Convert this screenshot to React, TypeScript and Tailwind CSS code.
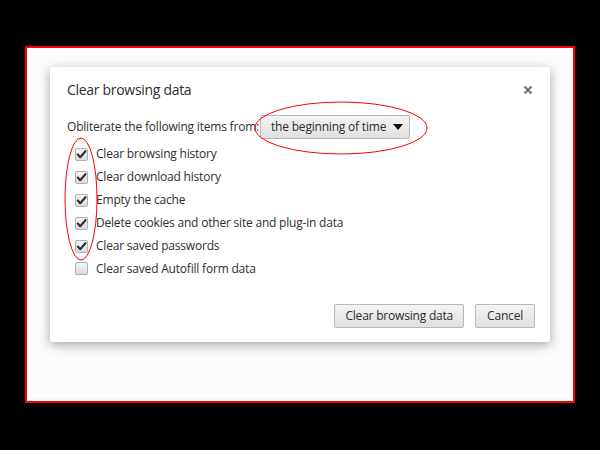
import React from "react";

const font = { fontFamily: '"Open Sans", "Noto Sans", sans-serif' };

function Check({ checked }: { checked: boolean }) {
  return (
    <div className="w-[13px] h-[13px] rounded-[2px] border border-[#b0b0b0] bg-gradient-to-b from-[#f4f4f4] to-[#dcdcdc] flex items-center justify-center shrink-0">
      {checked && (
        <svg width="11" height="11" viewBox="0 0 11 11">
          <path d="M1.8 5.6 L4.2 8.2 L9.4 2.2" fill="none" stroke="#333" strokeWidth="2.2" strokeLinecap="round" strokeLinejoin="round" />
        </svg>
      )}
    </div>
  );
}

const items: [string, boolean][] = [
  ["Clear browsing history", true],
  ["Clear download history", true],
  ["Empty the cache", true],
  ["Delete cookies and other site and plug-in data", true],
  ["Clear saved passwords", true],
  ["Clear saved Autofill form data", false],
];

const btn = "h-[24px] border border-[#b8b8b8] rounded-[2px] bg-gradient-to-b from-[#f3f3f3] to-[#e0e0e0] whitespace-nowrap";

export default function App() {
  return (
    <div className="w-[600px] h-[450px] bg-black pt-[46px] pl-[25px]" style={font}>
      <div className="relative w-[550px] h-[357px] border-2 border-[#ff0000] bg-[#fcfcfc]">
        <div className="ml-[23px] mt-[19px] w-[500px] h-[275px] bg-white rounded-[3px] shadow-[0_3px_12px_rgba(0,0,0,0.35)] relative text-[#2e2e2e] tracking-[-0.2px]">
          <div className="flex items-center justify-between pl-[17px] pr-[17px] pt-[12px]">
            <div className="text-[14px] tracking-[-0.3px]">Clear browsing data</div>
            <svg width="10" height="10" viewBox="0 0 10 10" className="mt-[1px]">
              <path d="M1.5 1.5 L8.5 8.5 M8.5 1.5 L1.5 8.5" stroke="#777" strokeWidth="2.2" />
            </svg>
          </div>
          <div className="flex items-center pl-[17px] mt-[15px] text-[12px]">
            <span className="whitespace-nowrap">Obliterate the following items from:</span>
            <div className="ml-[1px] w-[150px] h-[24px] border border-[#b8b8b8] rounded-[2px] bg-gradient-to-b from-[#f3f3f3] to-[#e0e0e0] flex items-center pl-[10px] pr-[6px] justify-between whitespace-nowrap">
              <span>the beginning of time</span>
              <svg width="10" height="6" viewBox="0 0 10 6"><path d="M0 0 L10 0 L5 6 Z" fill="#111" /></svg>
            </div>
          </div>
          <div className="flex flex-col pl-[25px] mt-[4px] text-[12px]">
            {items.map(([t, c]) => (
              <div key={t} className="flex items-center h-[22.9px] gap-[8px] whitespace-nowrap">
                <Check checked={c} />
                <span>{t}</span>
              </div>
            ))}
          </div>
          <div className="absolute right-[15px] bottom-[14px] flex gap-[11px] text-[12px]">
            <button className={btn + " px-[10px]"}>Clear browsing data</button>
            <button className={btn + " px-[11px]"}>Cancel</button>
          </div>
        </div>
        <svg className="absolute left-0 top-0 pointer-events-none" width="550" height="357">
          <ellipse cx="314" cy="80" rx="86" ry="26" fill="none" stroke="#ff0000" strokeWidth="1" />
          <ellipse cx="54" cy="151" rx="16" ry="61" fill="none" stroke="#ff0000" strokeWidth="1" />
        </svg>
      </div>
    </div>
  );
}
